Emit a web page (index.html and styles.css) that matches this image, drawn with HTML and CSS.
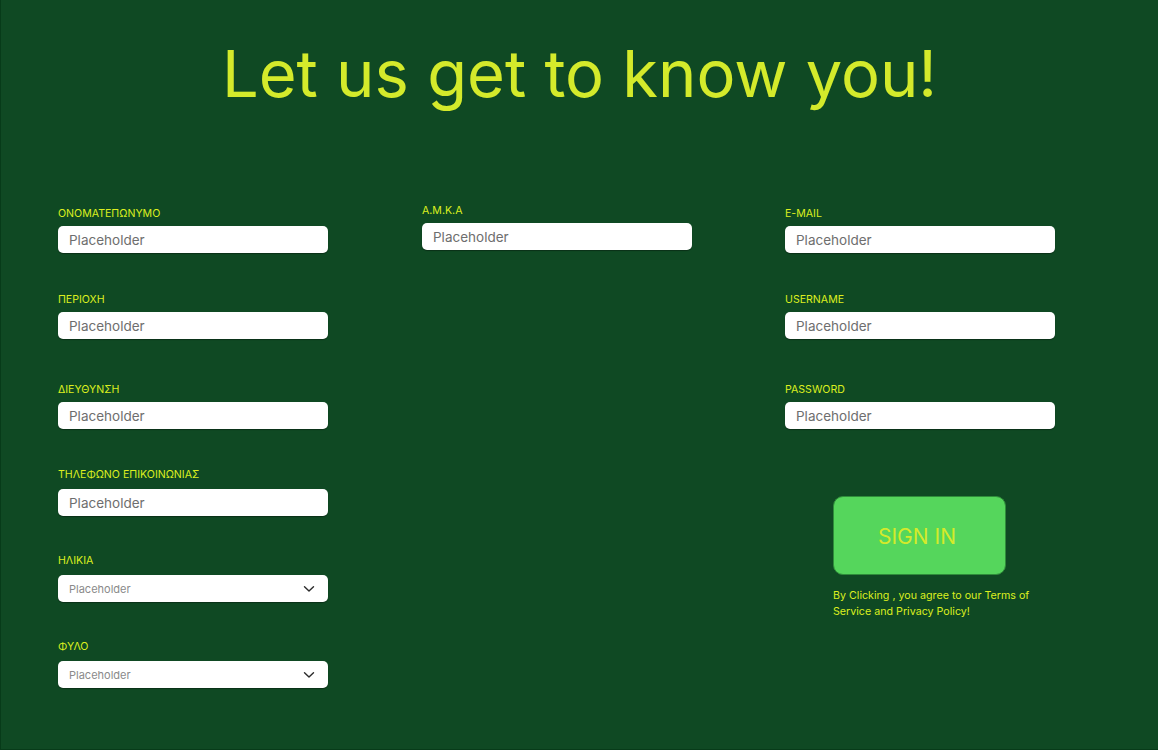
FILE: index.html
```html
<!DOCTYPE html>
<html lang="el">
<head>
<meta charset="utf-8">
<title>Let us get to know you!</title>
<link rel="stylesheet" href="styles.css">
</head>
<body>
<div class="page">
  <h1 class="title">Let us get to know you!</h1>
  <div class="columns">
    <div class="col col-left">
      <div class="field">
        <label class="label">ΟΝΟΜΑΤΕΠΩΝΥΜΟ</label>
        <input class="input" type="text" placeholder="Placeholder">
      </div>
      <div class="field">
        <label class="label">ΠΕΡΙΟΧΗ</label>
        <input class="input" type="text" placeholder="Placeholder">
      </div>
      <div class="field">
        <label class="label">ΔΙΕΥΘΥΝΣΗ</label>
        <input class="input" type="text" placeholder="Placeholder">
      </div>
      <div class="field field-wide">
        <label class="label">ΤΗΛΕΦΩΝΟ ΕΠΙΚΟΙΝΩΝΙΑΣ</label>
        <input class="input" type="text" placeholder="Placeholder">
      </div>
      <div class="field field-wide">
        <label class="label">ΗΛΙΚΙΑ</label>
        <div class="select">
          <span class="select-text">Placeholder</span>
          <svg class="chevron" width="12" height="8" viewBox="0 0 12 8"><path d="M1.5 1.8 L6 6 L10.5 1.8" fill="none" stroke="#2b2b2b" stroke-width="1.4" stroke-linecap="round" stroke-linejoin="round"/></svg>
        </div>
      </div>
      <div class="field field-wide">
        <label class="label">ΦΥΛΟ</label>
        <div class="select">
          <span class="select-text">Placeholder</span>
          <svg class="chevron" width="12" height="8" viewBox="0 0 12 8"><path d="M1.5 1.8 L6 6 L10.5 1.8" fill="none" stroke="#2b2b2b" stroke-width="1.4" stroke-linecap="round" stroke-linejoin="round"/></svg>
        </div>
      </div>
    </div>
    <div class="col col-mid">
      <div class="field">
        <label class="label">Α.Μ.Κ.Α</label>
        <input class="input" type="text" placeholder="Placeholder">
      </div>
    </div>
    <div class="col col-right">
      <div class="field">
        <label class="label">E-MAIL</label>
        <input class="input" type="text" placeholder="Placeholder">
      </div>
      <div class="field">
        <label class="label">USERNAME</label>
        <input class="input" type="text" placeholder="Placeholder">
      </div>
      <div class="field">
        <label class="label">PASSWORD</label>
        <input class="input" type="password" placeholder="Placeholder">
      </div>
      <div class="signin">
        <button class="btn" type="button">SIGN IN</button>
        <p class="terms">By Clicking , you agree to our Terms of Service and Privacy Policy!</p>
      </div>
    </div>
  </div>
</div>
</body>
</html>
```

FILE: styles.css
```css
* { box-sizing: border-box; }
html, body { margin: 0; padding: 0; }
body {
  background: #0f4923;
  font-family: Inter, "Noto Sans", "DejaVu Sans", sans-serif;
}
.page {
  width: 1158px;
  height: 750px;
  background: #0f4923;
  border-left: 1px solid #073b19;
  border-bottom: 1px solid #073b19;
  overflow: hidden;
}
.title {
  margin: 42px 0 0 0;
  text-align: center;
  font-size: 65px;
  line-height: 64px;
  font-weight: 400;
  color: #d4ea2b;
}
.columns {
  display: grid;
  grid-template-columns: 364px 363px 270px;
  padding-left: 57px;
  margin-top: 101px;
}
.col { display: flex; flex-direction: column; width: 270px; }
.col-mid { margin-top: -3px; }
.field { display: flex; flex-direction: column; }
.label {
  font-size: 10.6px;
  line-height: 13px;
  color: #dcef1f;
  margin-bottom: 6px;
}
.field-wide .label { margin-bottom: 8px; }
.col-left .field:nth-child(2) { margin-top: 40px; }
.col-left .field:nth-child(3) { margin-top: 44px; }
.col-left .field:nth-child(4) { margin-top: 39px; }
.col-left .field:nth-child(5) { margin-top: 38px; }
.col-left .field:nth-child(6) { margin-top: 38px; }
.col-right .field:nth-child(2) { margin-top: 40px; }
.col-right .field:nth-child(3) { margin-top: 44px; }
.input, .select {
  width: 270px;
  height: 27px;
  border: none;
  border-radius: 5px;
  background: #ffffff;
  box-shadow: 0 1px 1px rgba(0, 0, 0, 0.35);
  padding: 0 11px;
  margin: 0;
  font-family: Inter, "Noto Sans", sans-serif;
  font-size: 13.5px;
  color: #333;
  outline: none;
}
.input::placeholder { color: #6e6e6e; }
.select {
  display: flex;
  align-items: center;
  justify-content: space-between;
  padding: 0 13px 0 11px;
}
.select-text { font-size: 11px; color: #8a8a8a; }
.chevron { display: block; }
.signin {
  margin-top: 67px;
  padding-left: 48px;
  display: flex;
  flex-direction: column;
  align-items: flex-start;
}
.btn {
  width: 173px;
  height: 79px;
  background: #55d65c;
  border: 1px solid #2f8c3a;
  border-radius: 10px;
  color: #d4ea2b;
  font-family: Inter, "Noto Sans", sans-serif;
  font-size: 21px;
  font-weight: 400;
  padding: 2px 5px 0 0;
  cursor: pointer;
}
.terms {
  margin: 13px 0 0 0;
  width: 210px;
  font-size: 10.7px;
  line-height: 16px;
  color: #dcef1f;
}
```
